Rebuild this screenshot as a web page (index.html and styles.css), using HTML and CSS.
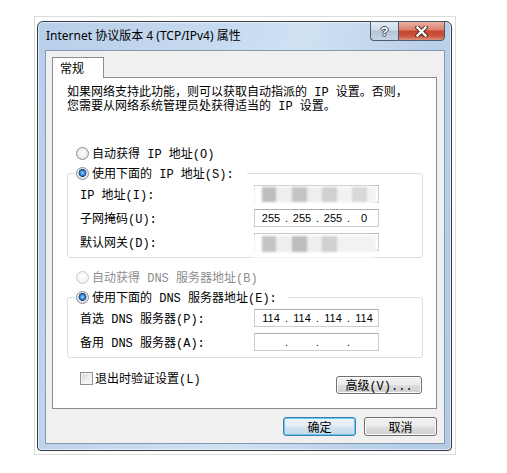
FILE: index.html
```html
<!DOCTYPE html>
<html lang="zh-CN">
<head>
    <meta charset="UTF-8">
    <meta name="viewport" content="width=device-width, initial-scale=1.0">
    <title>Internet 协议版本 4 (TCP/IPv4) 属性</title>
    <link rel="stylesheet" href="styles.css">
</head>
<body>
    <div class="shot">
        <div class="window">
            <div class="titlebar">
                <span class="title">Internet 协议版本 4 (TCP/IPv4) 属性</span>
                <div class="caption-buttons">
                    <span class="cap-btn help">?</span>
                    <span class="cap-btn close">
                        <svg width="13" height="11" viewBox="0 0 13 11">
                            <path d="M2.5 1.5 L10.5 9.5 M10.5 1.5 L2.5 9.5" stroke="#4a2a24" stroke-width="4.4" stroke-linecap="square"/>
                            <path d="M2.5 1.5 L10.5 9.5 M10.5 1.5 L2.5 9.5" stroke="#fff" stroke-width="2.4" stroke-linecap="square"/>
                        </svg>
                    </span>
                </div>
            </div>

            <div class="face">
                <div class="tabs">
                    <span class="tab">常规</span>
                </div>
                <div class="panel">
                    <p class="intro">如果网络支持此功能，则可以获取自动指派的 IP 设置。否则，<br>您需要从网络系统管理员处获得适当的 IP 设置。</p>

                    <label class="option first"><input type="radio" name="ip">自动获得 IP 地址(O)</label>
                    <fieldset class="group">
                        <legend class="legend-ip"><label class="option"><input type="radio" name="ip" checked>使用下面的 IP 地址(S):</label></legend>
                        <div class="field-row">
                            <span>IP 地址(I):</span>
                            <div class="ip-box">
                                <div class="smudge">
                                    <span class="s-a w14"></span><span class="s-e w16"></span><span class="s-b w15"></span><span class="s-e w15"></span><span class="s-c w15"></span><span class="s-f w15"></span><span class="s-d w15"></span><span class="s-f grow"></span>
                                </div>
                            </div>
                        </div>
                        <div class="field-row">
                            <span>子网掩码(U):</span>
                            <div class="ip-box">
                                <span>255</span><span>.</span><span>255</span><span>.</span><span>255</span><span>.</span><span>0</span>
                            </div>
                        </div>
                        <div class="field-row">
                            <span>默认网关(D):</span>
                            <div class="ip-box">
                                <div class="smudge low">
                                    <span class="s-b w14"></span><span class="s-e w16"></span><span class="s-a w15"></span><span class="s-e w15"></span><span class="s-c w15"></span><span class="s-f grow"></span>
                                </div>
                            </div>
                        </div>
                    </fieldset>

                    <label class="option disabled"><input type="radio" name="dns" disabled>自动获得 DNS 服务器地址(B)</label>
                    <fieldset class="group">
                        <legend class="legend-dns"><label class="option"><input type="radio" name="dns" checked>使用下面的 DNS 服务器地址(E):</label></legend>
                        <div class="field-row">
                            <span>首选 DNS 服务器(P):</span>
                            <div class="ip-box">
                                <span>114</span><span>.</span><span>114</span><span>.</span><span>114</span><span>.</span><span>114</span>
                            </div>
                        </div>
                        <div class="field-row">
                            <span>备用 DNS 服务器(A):</span>
                            <div class="ip-box">
                                <span></span><span>.</span><span></span><span>.</span><span></span><span>.</span><span></span>
                            </div>
                        </div>
                    </fieldset>

                    <div class="bottom-row">
                        <label class="check"><input type="checkbox">退出时验证设置(L)</label>
                        <button class="btn btn-adv">高级(V)...</button>
                    </div>
                </div>

                <div class="actions">
                    <button class="btn default">确定</button>
                    <button class="btn">取消</button>
                </div>
            </div>
        </div>
    </div>
</body>
</html>
```

FILE: styles.css
```css
* {
    box-sizing: border-box;
}

body {
    margin: 0;
    background: #fff;
    color: #000;
    font-family: "Noto Sans CJK SC", sans-serif;
    font-size: 12px;
}

/* marco gris claro de la captura */
.shot {
    width: 422px;
    height: 439px;
    margin: 16px 0 0 34px;
    padding: 4px 3px 3px 2px;
    border: 1px solid #dcdcdc;
}

.window {
    width: 415px;
    height: 430px;
    display: flex;
    flex-direction: column;
    border: 1px solid #363b42;
    border-radius: 6px 6px 4px 4px;
    background: linear-gradient(100deg, #b7cfe9 0%, #c8dbf0 40%, #d0e1f3 55%, #bad1ea 80%, #b2cae5 100%);
    box-shadow: inset 0 0 0 1px rgba(255, 255, 255, 0.6);
}

.titlebar {
    height: 28px;
    display: flex;
    align-items: flex-start;
    padding-left: 8px;
}

.title {
    font-family: "Noto Sans", "Noto Sans CJK SC", sans-serif;
    font-size: 12px;
    line-height: 27px;
}

.caption-buttons {
    display: flex;
    margin: -1px 6px 0 auto;
}

.cap-btn {
    height: 20px;
    display: flex;
    align-items: center;
    justify-content: center;
    border: 1px solid #4f5a6b;
}

.help {
    width: 28px;
    border-right: none;
    border-radius: 0 0 0 4px;
    background: linear-gradient(#e4ecf5 0%, #cfdbe9 45%, #b4c5d9 52%, #c6d4e4 100%);
    color: #fff;
    font: bold 13px "Liberation Sans", sans-serif;
    text-shadow: -1px 0 #3d4b5d, 1px 0 #3d4b5d, 0 -1px #3d4b5d, 0 1px #3d4b5d;
}

.close {
    width: 47px;
    border-radius: 0 0 4px 0;
    background: linear-gradient(#eab0a2 0%, #dc8370 42%, #c5452d 52%, #cc5840 80%, #de9280 100%);
}

.face {
    flex: 1;
    margin: 0 6px 6px 7px;
    padding: 6px 7px 0 6px;
    background: #f0f0f0;
    border: 1px solid #8798ad;
}

.tabs {
    display: flex;
}

.tab {
    position: relative;
    z-index: 1;
    width: 52px;
    height: 21px;
    margin-bottom: -1px;
    padding-left: 7px;
    line-height: 20px;
    background: #fff;
    border: 1px solid #898c95;
    border-bottom: none;
}

.panel {
    padding: 8px 13px 14px 14px;
    background: #fff;
    border: 1px solid #898c95;
    font-family: "Liberation Mono", "Noto Sans CJK SC", monospace;
    font-size: 12px;
}

.intro {
    margin: 0;
    line-height: 14px;
}

.option {
    display: flex;
    align-items: center;
    gap: 3px;
    height: 20px;
}

.option.first {
    margin-top: 29px;
    padding-left: 9px;
}

.option.disabled {
    margin-top: 9px;
    padding-left: 9px;
    color: #8d8d8d;
}

input[type="radio"] {
    appearance: none;
    width: 13px;
    height: 13px;
    margin: 0;
    border: 1px solid #8c8e90;
    border-radius: 50%;
    background: radial-gradient(circle at 50% 45%, #fdfdfd 0, #f0f0f0 45%, #d3d3d3 100%);
}

input[type="radio"]:checked {
    background:
        radial-gradient(circle at 50% 45%, #a6dcff 0, #4aa2e6 1.6px, #1c5aa0 3.2px, #24446d 3.7px, transparent 4.2px),
        radial-gradient(circle at 50% 45%, #fdfdfd 0, #f0f0f0 45%, #d3d3d3 100%);
}

input[type="radio"]:disabled {
    border-color: #c9cacb;
    background: radial-gradient(circle at 50% 45%, #fff 0, #f6f6f6 50%, #e6e6e6 100%);
}

.group {
    margin: 0;
    padding: 0 43px 6px 0;
    min-width: 0;
    border: 1px solid #d5dfe5;
    border-radius: 3px;
}

.group legend {
    margin-left: 7px;
    padding: 0 0 0 1px;
}

.legend-ip {
    width: 172px;
}

.legend-dns {
    width: 213px;
}

.field-row {
    display: flex;
    align-items: center;
    justify-content: space-between;
    height: 18px;
    padding-left: 12px;
}

legend + .field-row {
    margin-top: 2px;
}

.field-row + .field-row {
    margin-top: 6px;
}

.ip-box {
    position: relative;
    width: 125px;
    height: 18px;
    display: grid;
    grid-template-columns: 24px 7px 24px 7px 24px 7px 24px;
    align-items: center;
    padding-left: 4px;
    background: #fff;
    border: 1px solid #c9ccd2;
    border-top-color: #abadb3;
    font-family: "Liberation Sans", sans-serif;
    font-size: 11px;
    line-height: 16px;
    text-align: center;
}

/* dirección tapada con mosaico borroso */
.smudge {
    position: absolute;
    top: 1px;
    bottom: 0;
    left: 7px;
    right: 2px;
    display: flex;
    filter: blur(1.1px);
    background: #f2f2f2;
    box-shadow: -6px 3px 6px 4px #fff;
}

.smudge.low {
    top: 2px;
    bottom: -2px;
}

.smudge span { height: 100%; }
.w14 { width: 14px; }
.w15 { width: 15px; }
.w16 { width: 16px; }
.grow { flex: 1; }
.s-a { background: #bdbdbd; }
.s-b { background: #c4c4c4; }
.s-c { background: #d0d0d0; }
.s-d { background: #d8d8d8; }
.s-e { background: #eeeeee; }
.s-f { background: #f2f2f2; }

.bottom-row {
    display: flex;
    align-items: flex-start;
    justify-content: space-between;
    margin-top: 12px;
}

.check {
    display: flex;
    align-items: center;
    gap: 2px;
    height: 16px;
    padding-left: 13px;
}

input[type="checkbox"] {
    appearance: none;
    width: 13px;
    height: 13px;
    margin: 0;
    border: 1px solid #8e8f8f;
    background: linear-gradient(135deg, #d4d4d4 0%, #f0f0f0 60%, #fbfbfb 100%);
    box-shadow: inset 0 0 0 1px #f6f6f6;
}

.btn {
    height: 18px;
    padding: 0;
    display: flex;
    align-items: center;
    justify-content: center;
    color: #000;
    border: 1px solid #707070;
    border-radius: 3px;
    background: linear-gradient(#f3f3f3 0%, #ebebeb 48%, #dddddd 52%, #cfcfcf 100%);
    box-shadow: inset 0 0 0 1px #fbfbfb;
    font-family: "Noto Sans CJK SC", sans-serif;
    font-size: 12px;
}

.btn-adv {
    width: 86px;
    margin: 6px 1px 0 0;
    font-family: "Liberation Mono", "Noto Sans CJK SC", monospace;
}

.actions {
    display: flex;
    justify-content: flex-end;
    gap: 8px;
    margin-top: 8px;
}

.actions .btn {
    width: 73px;
    height: 19px;
}

.btn.default {
    border-color: #3c7fb1;
    box-shadow: inset 0 0 0 1px #62c9f3;
    background: linear-gradient(#eef5fa 0%, #e2edf5 48%, #d2e2ee 52%, #c6d9e8 100%);
}
```
